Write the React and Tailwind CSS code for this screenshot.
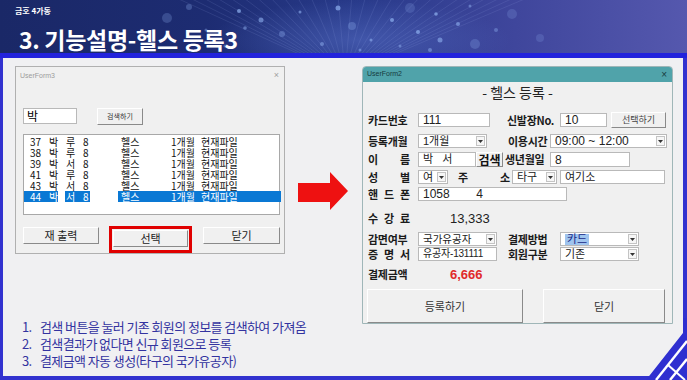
import React from "react";

const dots = [
  [167, 18, 5, 0.25], [189, 7, 3, 0.3], [239, 11, 2, 0.7], [261, 20, 2.5, 0.6], [245, 28, 1.8, 0.5],
  [282, 34, 3, 0.35], [300, 12, 1.5, 0.6], [322, 44, 2, 0.5], [338, 8, 2.5, 0.7], [352, 26, 4, 0.3],
  [371, 40, 1.5, 0.6], [392, 20, 2, 0.7], [410, 8, 5, 0.2], [418, 32, 2, 0.7], [436, 14, 1.8, 0.7],
  [440, 40, 2.5, 0.6], [458, 24, 2, 0.6], [470, 6, 1.5, 0.5], [475, 44, 5, 0.25], [496, 30, 2, 0.4],
  [512, 14, 5, 0.2], [540, 38, 4, 0.2], [225, 46, 1.5, 0.4], [206, 30, 1.5, 0.4], [360, 50, 1.5, 0.5],
  [430, 50, 2, 0.5], [400, 46, 1.5, 0.5],
];

function HeaderArt() {
  const tops = [];
  for (let x = 170; x <= 540; x += 14) tops.push(x);
  return (
    <svg className="absolute inset-0" width="687" height="53" viewBox="0 0 687 53">
      <defs>
        <radialGradient id="glow" cx="0.5" cy="0.5" r="0.5">
          <stop offset="0" stopColor="#5f78d0" stopOpacity="0.45" />
          <stop offset="1" stopColor="#5f78d0" stopOpacity="0" />
        </radialGradient>
      </defs>
      <ellipse cx="360" cy="40" rx="150" ry="40" fill="url(#glow)" />
      {tops.map((x) => (
        <line key={x} x1="345" y1="75" x2={x} y2="-5" stroke="#9fb4ee" strokeOpacity="0.22" strokeWidth="0.6" />
      ))}
      {dots.map(([x, y, r, o], i) => (
        <circle key={i} cx={x} cy={y} r={r} fill="#8fb0f0" fillOpacity={o} />
      ))}
    </svg>
  );
}

function Arrow() {
  return (
    <svg width="50" height="38" viewBox="0 0 50 38">
      <polygon points="0,11 32,11 32,0 50,19 32,38 32,30 0,30" fill="#ee1111" />
    </svg>
  );
}

function Corner() {
  return (
    <svg className="absolute right-0 bottom-0" width="50" height="62" viewBox="0 0 50 62">
      <polygon points="9,62 46,15 46,0 50,0 50,62" fill="#2f2fd0" />
      <line x1="19" y1="62" x2="50" y2="23" stroke="#ffffff" strokeWidth="2.4" />
      <line x1="33" y1="62" x2="50" y2="41" stroke="#ffffff" strokeWidth="2.4" />
      <line x1="31" y1="47" x2="48" y2="62" stroke="#ffffff" strokeWidth="2" />
    </svg>
  );
}

function DropBtn() {
  return (
    <div className="ml-auto mr-[1px] w-[9px] h-[10px] shrink-0 border border-[#c4c4c4] bg-[#f6f6f6] flex items-center justify-center">
      <svg width="5" height="3" viewBox="0 0 5 3">
        <polygon points="0,0 5,0 2.5,3" fill="#333" />
      </svg>
    </div>
  );
}

function TB({ w, children, cls = "text-[12px]" }) {
  return (
    <div className={`${w} h-[14px] shrink-0 bg-white border border-[#b9b9b9] flex items-center pl-[4px] leading-none text-[#222] whitespace-nowrap overflow-hidden font-['Liberation_Sans','Noto_Sans_CJK_KR',sans-serif] ${cls}`}>
      {children}
    </div>
  );
}

function Combo({ w, children, cls = "text-[12px]" }) {
  return (
    <div className={`${w} h-[14px] shrink-0 bg-white border border-[#b9b9b9] flex items-center pl-[4px] leading-none text-[#222] whitespace-nowrap font-['Liberation_Sans','Noto_Sans_CJK_KR',sans-serif] ${cls}`}>
      {children}
      <DropBtn />
    </div>
  );
}

function Lbl({ w, children }) {
  return (
    <div className={`${w} shrink-0 text-[11px] font-bold leading-none text-[#1b1b1b] tracking-[-0.3px] whitespace-nowrap`}>
      {children}
    </div>
  );
}

function SpLbl({ w, chars }) {
  return (
    <div className={`${w} shrink-0 flex justify-between text-[11px] font-bold leading-none text-[#1b1b1b]`}>
      {chars.map((c, i) => (
        <span key={i}>{c}</span>
      ))}
    </div>
  );
}

const face = "bg-[#f0f0f0] border border-t-white border-l-white border-b-[#8a8a8a] border-r-[#8a8a8a] flex items-center justify-center";

const rows = [
  ["37", "루"], ["38", "루"], ["39", "서"], ["41", "루"], ["43", "서"], ["44", "서"],
];

function ListRow({ no, mid, sel }) {
  const bg = sel ? "bg-[#0a78d4] text-white" : "";
  return (
    <div className="flex h-[11px] items-center leading-none whitespace-nowrap">
      <div className={`w-[34px] h-[11px] shrink-0 flex items-center ${bg}`}>
        <span className="w-[25px] shrink-0 pl-[6px]">{no}</span>
        <span>박</span>
      </div>
      <div className="w-[7px] shrink-0" />
      <div className={`w-[25px] h-[11px] shrink-0 flex items-center ${bg}`}>
        <span className="w-[18px] shrink-0 pl-[1px]">{mid}</span>
        <span>8</span>
      </div>
      <div className="w-[28px] shrink-0" />
      <div className={`w-[163px] h-[11px] shrink-0 flex items-center ${bg}`}>
        <span className="w-[53px] shrink-0 pl-[3px]">헬스</span>
        <span className="w-[30px] shrink-0">1개월</span>
        <span>현재파일</span>
      </div>
    </div>
  );
}

function LeftForm() {
  return (
    <div className="w-[270px] h-[188px] bg-[#f0f0f0] border border-[#b0b0b0] flex flex-col">
      <div className="h-[18px] flex items-center justify-between pl-[4px] pr-[5px]">
        <span className="text-[7px] text-[#9c9c9c] font-['Liberation_Sans',sans-serif]">UserForm3</span>
        <span className="text-[9px] text-[#a0a0a0] font-['Liberation_Sans',sans-serif]">×</span>
      </div>
      <div className="mt-[23px] flex items-start">
        <div className="ml-[7px] w-[54px] h-[16px] bg-white border border-[#b9b9b9] flex items-center pl-[3px] text-[12px] leading-none">박</div>
        <div className={`ml-[20px] w-[46px] h-[17px] text-[7px] text-[#333] ${face}`}>검색하기</div>
      </div>
      <div className="mt-[9px] ml-[7px] w-[257px] h-[81px] bg-white border border-[#a8a8a8] pt-[1px] text-[10px] text-[#111]">
        {rows.map(([n, m], i) => (
          <ListRow key={n} no={n} mid={m} sel={i === 5} />
        ))}
      </div>
      <div className="mt-[11px] flex items-start">
        <div className={`ml-[7px] mt-[1px] w-[76px] h-[17px] text-[11px] text-[#222] ${face}`}>재 출력</div>
        <div className="ml-[10px] w-[83px] h-[27px] border-[3px] border-[#e00000] p-[1px]">
          <div className={`w-full h-[17px] text-[11px] text-[#222] ${face}`}>선택</div>
        </div>
        <div className={`ml-[11px] mt-[1px] w-[77px] h-[17px] text-[11px] text-[#222] ${face}`}>닫기</div>
      </div>
    </div>
  );
}

function RightForm() {
  return (
    <div className="w-[311px] h-[258px] bg-[#f0f0f0] border border-[#9fb6b8] rounded-t-[4px] flex flex-col">
      <div className="h-[15px] bg-[#50a3aa] rounded-t-[3px] flex items-center justify-between pl-[4px] pr-[5px]">
        <span className="text-[7px] text-[#173b40] font-['Liberation_Sans',sans-serif]">UserForm2</span>
        <span className="text-[10px] text-[#173b40] font-['Liberation_Sans',sans-serif] leading-none">×</span>
      </div>
      <div className="h-[20px] text-center text-[14px] leading-[20px] text-[#222]">- 헬스 등록 -</div>

      <div className="pl-[5px] flex flex-col">
        <div className="mt-[11px] h-[14px] flex items-center">
          <Lbl w="w-[50px]">카드번호</Lbl>
          <TB w="w-[72px]">111</TB>
          <div className="w-[17px] shrink-0" />
          <Lbl w="w-[53px]">신발장No.</Lbl>
          <TB w="w-[47px]">10</TB>
          <div className={`ml-[4px] w-[55px] h-[16px] text-[9px] text-[#444] ${face}`}>선택하기</div>
        </div>

        <div className="mt-[7px] h-[14px] flex items-center">
          <Lbl w="w-[50px]">등록개월</Lbl>
          <Combo w="w-[69px]" cls="text-[11px]">1개월</Combo>
          <div className="w-[21px] shrink-0" />
          <Lbl w="w-[42px]">이용시간</Lbl>
          <Combo w="w-[117px]">09:00 ~ 12:00</Combo>
        </div>

        <div className="mt-[4px] h-[15px] flex items-center">
          <SpLbl w="w-[42px]" chars={["이", "름"]} />
          <div className="w-[8px] shrink-0" />
          <TB w="w-[58px]" cls="h-[15px] text-[11px] tracking-[3px]">박 서</TB>
          <div className={`w-[27px] h-[15px] shrink-0 text-[12px] font-bold text-[#111] ${face}`}>검색</div>
          <div className="w-[2px] shrink-0" />
          <Lbl w="w-[45px]">생년월일</Lbl>
          <TB w="w-[80px]" cls="h-[15px] text-[12px]">8</TB>
        </div>

        <div className="mt-[3px] h-[14px] flex items-center">
          <SpLbl w="w-[42px]" chars={["성", "별"]} />
          <div className="w-[8px] shrink-0" />
          <Combo w="w-[30px]" cls="text-[11px]">여</Combo>
          <div className="w-[10px] shrink-0" />
          <SpLbl w="w-[52px]" chars={["주", "소"]} />
          <div className="w-[2px] shrink-0" />
          <Combo w="w-[45px]" cls="text-[11px]">타구</Combo>
          <div className="w-[3px] shrink-0" />
          <TB w="w-[105px]" cls="text-[11px]">여기소</TB>
        </div>

        <div className="mt-[3px] h-[14px] flex items-center">
          <SpLbl w="w-[42px]" chars={["핸", "드", "폰"]} />
          <div className="w-[8px] shrink-0" />
          <TB w="w-[149px]" cls="text-[12px] whitespace-pre">{"1058        4"}</TB>
        </div>

        <div className="mt-[10px] h-[14px] flex items-center">
          <SpLbl w="w-[42px]" chars={["수", "강", "료"]} />
          <div className="w-[40px] shrink-0" />
          <span className="text-[13px] leading-none text-[#222] font-['Liberation_Sans',sans-serif]">13,333</span>
        </div>

        <div className="mt-[7px] h-[14px] flex items-center">
          <Lbl w="w-[50px]">감면여부</Lbl>
          <Combo w="w-[79px]" cls="text-[10.5px]">국가유공자</Combo>
          <div className="w-[11px] shrink-0" />
          <Lbl w="w-[52px]">결제방법</Lbl>
          <Combo w="w-[79px]" cls="text-[11px]">
            <span className="bg-[#9fc4ee] text-[#1a2a88] px-[2px]">카드</span>
          </Combo>
        </div>

        <div className="mt-[1px] h-[14px] flex items-center">
          <SpLbl w="w-[42px]" chars={["증", "명", "서"]} />
          <div className="w-[8px] shrink-0" />
          <TB w="w-[79px]" cls="pl-[2px] text-[10px] tracking-[-0.2px]">유공자-131111</TB>
          <div className="w-[11px] shrink-0" />
          <Lbl w="w-[52px]">회원구분</Lbl>
          <Combo w="w-[79px]" cls="text-[11px]">기존</Combo>
        </div>

        <div className="mt-[6px] h-[14px] flex items-center">
          <Lbl w="w-[50px]">결제금액</Lbl>
          <div className="w-[32px] shrink-0" />
          <span className="text-[13px] leading-none font-bold text-[#e02a2a] font-['Liberation_Sans',sans-serif]">6,666</span>
        </div>
      </div>

      <div className="mt-[8px] flex">
        <div className={`ml-[4px] w-[156px] h-[34px] text-[11px] text-[#333] ${face}`}>등록하기</div>
        <div className={`ml-[20px] w-[122px] h-[34px] text-[11px] text-[#333] ${face}`}>닫기</div>
      </div>
    </div>
  );
}

export default function App() {
  return (
    <div className="relative w-[687px] h-[380px] overflow-hidden bg-[#f0f0f2] font-['Noto_Sans_CJK_KR',sans-serif]">
      <div className="relative h-[53px] bg-[linear-gradient(90deg,#1a2867_0%,#1d2c72_30%,#283a8a_52%,#3f469c_75%,#5558ae_100%)]">
        <HeaderArt />
        <div className="relative pl-[15px] pt-[7px] text-[8px] font-bold leading-none text-white">금호 4가동</div>
        <div className="relative pl-[19px] mt-[12px] text-[23px] font-bold leading-[25px] tracking-[-0.3px] text-white whitespace-nowrap">
          3. 기능설명-헬스 등록3
        </div>
      </div>
      <div className="h-[5px] bg-[#2323dc]" />
      <div className="h-[322px] border-l-[3px] border-r-[4px] border-b-[4px] border-[#3232cf] flex items-start">
        <div className="w-[282px] shrink-0 pl-[12px] pt-[8px]">
          <LeftForm />
          <div className="mt-[64px] ml-[7px] text-[13px] leading-[17px] tracking-[-0.6px] text-[#3333a0] whitespace-nowrap">
            <div className="flex"><span className="w-[18px] shrink-0">1.</span><span>검색 버튼을 눌러 기존 회원의 정보를 검색하여 가져옴</span></div>
            <div className="flex"><span className="w-[18px] shrink-0">2.</span><span>검색결과가 없다면 신규 회원으로 등록</span></div>
            <div className="flex"><span className="w-[18px] shrink-0">3.</span><span>결제금액 자동 생성(타구의 국가유공자)</span></div>
          </div>
        </div>
        <div className="ml-[13px] mt-[114px] shrink-0">
          <Arrow />
        </div>
        <div className="ml-[14px] mt-[8px] shrink-0">
          <RightForm />
        </div>
      </div>
      <Corner />
    </div>
  );
}
